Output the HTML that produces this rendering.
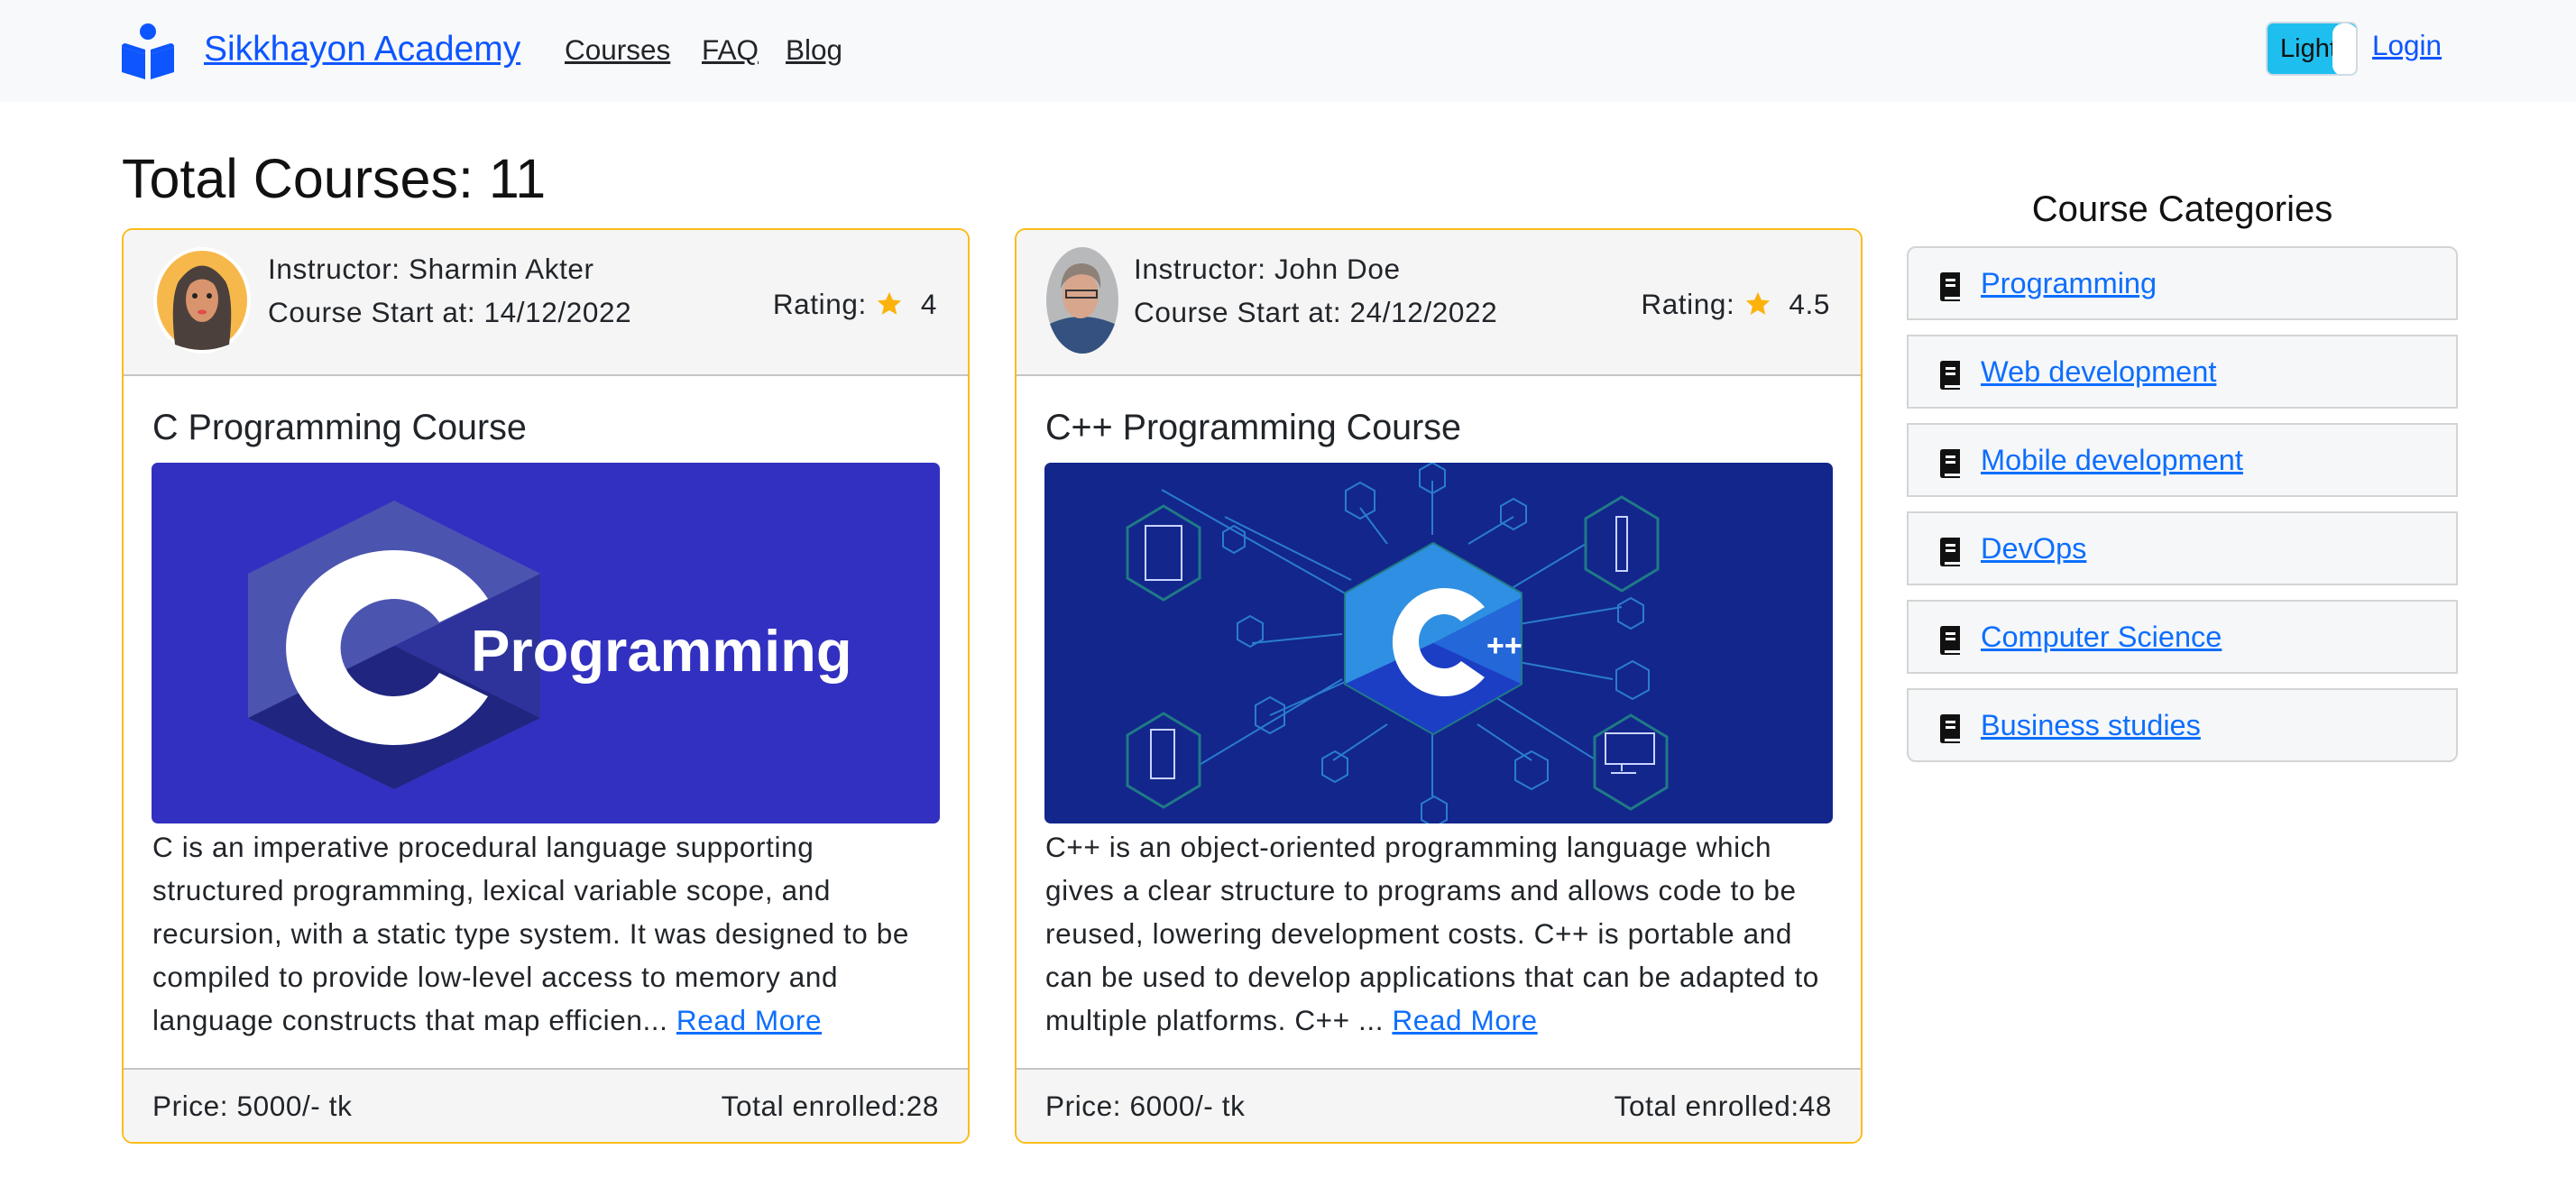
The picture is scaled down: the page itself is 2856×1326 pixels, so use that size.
<!DOCTYPE html>
<html><head><meta charset="utf-8"><style>
*{box-sizing:border-box;margin:0;padding:0}
body{width:2856px;height:1326px;overflow:hidden;background:#fff;font-family:"Liberation Sans",sans-serif;color:#212529;position:relative}
.abs{position:absolute}
a{color:#0d6efd;text-decoration:underline}
.nav{left:0;top:0;width:2856px;height:113px;background:#f8f9fa}
.card{border:2px solid #fbbc1d;border-radius:12px;width:940px;height:1015px;top:253px;overflow:hidden;background:#fff}
.chead{left:0;top:0;width:100%;height:162px;background:#f5f5f5;border-bottom:2px solid #c4c4c4}
.cfoot{left:0;bottom:0;width:100%;height:82px;background:#f5f5f5;border-top:2px solid #c4c4c4}
.t30{font-size:31.5px;letter-spacing:0.6px;white-space:nowrap}
.desc{font-size:31.5px;letter-spacing:0.6px;line-height:48px;white-space:nowrap}
.cat{left:2114px;width:611px;height:82px;background:#f6f7f9;border:2px solid #d4d4d4;border-radius:6px}
.cat a{position:absolute;left:80px;top:21px;font-size:32.5px}
.cat svg{position:absolute;left:35px;top:27px}
</style></head><body>
<div class="abs nav"></div>
<svg class="abs" style="left:133px;top:26px" width="62" height="62" viewBox="0 0 62 62"><circle cx="31" cy="9" r="9" fill="#0d55ff"/><path d="M2 26 L28 34 L28 62 L2 54 Z M34 34 L60 26 L60 54 L34 62 Z" fill="#0d55ff"/><path d="M2 26 Q2 22 6 22 L28 29 L28 34 Z M60 26 Q60 22 56 22 L34 29 L34 34Z" fill="#0d55ff"/></svg>
<a class="abs" style="left:226px;top:33px;font-size:39px;color:#0d55ff">Sikkhayon Academy</a>
<a class="abs" style="left:626px;top:37px;font-size:31.5px;color:#212529">Courses</a>
<a class="abs" style="left:778px;top:37px;font-size:31.5px;color:#212529">FAQ</a>
<a class="abs" style="left:871px;top:37px;font-size:31.5px;color:#212529">Blog</a>
<div class="abs" style="left:2512px;top:24px;width:102px;height:60px;background:#1ebfee;border:2px solid #cfdbe6;border-radius:8px;overflow:hidden"><span class="abs" style="left:14px;top:12px;font-size:29px;color:#111">Light</span><div class="abs" style="left:72px;top:0;width:28px;height:58px;background:#fff;border-radius:12px"></div></div>
<a class="abs" style="left:2630px;top:32px;font-size:31.5px;color:#0d55ff">Login</a>

<div class="abs" style="left:135px;top:163px;font-size:61px;color:#111">Total Courses: 11</div>

<!-- card 1 -->
<div class="abs card" style="left:135px">
 <div class="abs chead"></div>
 <svg class="abs" style="left:31px;top:17px" width="112" height="122" viewBox="0 0 112 122"><ellipse cx="56" cy="61" rx="54" ry="59" fill="#fff"/><ellipse cx="56" cy="61" rx="50" ry="55" fill="#f7b84b"/><path d="M26 110 Q20 60 30 40 Q56 5 82 40 Q92 60 86 110 Q56 122 26 110Z" fill="#4c403c"/><ellipse cx="56" cy="60" rx="18" ry="25" fill="#d8946c"/><path d="M36 50 Q56 25 76 50 Q70 34 56 32 Q42 34 36 50Z" fill="#4c403c"/><circle cx="48" cy="56" r="3" fill="#222"/><circle cx="64" cy="56" r="3" fill="#222"/><ellipse cx="56" cy="74" rx="5" ry="2.5" fill="#e14b4b"/></svg>
 <div class="abs t30" style="left:160px;top:25px">Instructor: Sharmin Akter</div>
 <div class="abs t30" style="left:160px;top:73px">Course Start at: 14/12/2022</div>
 <div class="abs t30" style="right:34px;top:64px">Rating: <svg width="32" height="30" viewBox="0 0 24 24" style="vertical-align:-4px"><path d="M12 1.5l3.1 6.9 7.4.7-5.6 5 1.7 7.4L12 17.6l-6.6 3.9 1.7-7.4-5.6-5 7.4-.7z" fill="#fbb30c"/></svg>&nbsp; 4</div>
 <div class="abs" style="left:32px;top:197px;font-size:39.5px">C Programming Course</div>
 <svg class="abs" style="left:31px;top:258px;border-radius:7px" width="874" height="400" viewBox="0 0 874 400"><rect width="874" height="400" fill="#3230c0"/>
  <path d="M269 42 L431 123 L431 283 L269 362 L107 283 L107 123 Z" fill="#4b55b0"/>
  <path d="M269 203 L431 123 L431 283 Z" fill="#2d339a"/>
  <path d="M107 283 L269 203 L431 283 L269 362 Z" fill="#202580"/>
  <path d="M373 151 A120 108 0 1 0 373 259 L319 233 A59 54 0 1 1 319 177 Z" fill="#fff"/>
  <text x="354" y="231" font-family="Liberation Sans" font-weight="bold" font-size="65" fill="#fff">Programming</text></svg>
 <div class="abs desc" style="left:32px;top:660px">C is an imperative procedural language supporting<br>structured programming, lexical variable scope, and<br>recursion, with a static type system. It was designed to be<br>compiled to provide low-level access to memory and<br>language constructs that map efficien... <a>Read More</a></div>
 <div class="abs cfoot"><div class="abs t30" style="left:32px;top:22px">Price: 5000/- tk</div><div class="abs t30" style="right:32px;top:22px">Total enrolled:28</div></div>
</div>

<!-- card 2 -->
<div class="abs card" style="left:1125px">
 <div class="abs chead"></div>
 <svg class="abs" style="left:31px;top:17px" width="84" height="122" viewBox="0 0 84 122"><defs><clipPath id="e"><ellipse cx="42" cy="61" rx="40" ry="59"/></clipPath></defs><g clip-path="url(#e)"><rect width="84" height="122" fill="#b8b9bb"/><path d="M0 122 L4 88 Q40 70 80 88 L84 122Z" fill="#34517f"/><ellipse cx="40" cy="55" rx="20" ry="26" fill="#d7a68c"/><path d="M18 48 Q20 20 42 20 Q64 22 62 48 Q58 32 40 32 Q24 34 18 48Z" fill="#8d8178"/><rect x="24" y="50" width="34" height="8" fill="none" stroke="#333" stroke-width="2"/></g></svg>
 <div class="abs t30" style="left:130px;top:25px">Instructor: John Doe</div>
 <div class="abs t30" style="left:130px;top:73px">Course Start at: 24/12/2022</div>
 <div class="abs t30" style="right:34px;top:64px">Rating: <svg width="32" height="30" viewBox="0 0 24 24" style="vertical-align:-4px"><path d="M12 1.5l3.1 6.9 7.4.7-5.6 5 1.7 7.4L12 17.6l-6.6 3.9 1.7-7.4-5.6-5 7.4-.7z" fill="#fbb30c"/></svg>&nbsp; 4.5</div>
 <div class="abs" style="left:32px;top:197px;font-size:39.5px">C++ Programming Course</div>
 <svg class="abs" style="left:31px;top:258px;border-radius:7px" width="874" height="400" viewBox="0 0 874 400"><rect width="874" height="400" fill="#13268c"/>
  <g stroke="#2a7ccf" stroke-width="2" fill="none">
   <path d="M340 130 L200 60 M330 190 L230 200 M340 240 L250 280 M360 160 L130 30 M330 240 L130 360 M500 150 L650 60 M520 180 L640 160 M520 220 L630 240 M500 260 L660 360 M430 80 L430 20 M380 290 L320 330 M430 300 L430 370 M480 290 L540 330 M380 90 L350 50 M470 90 L520 60"/>
   <path d="M430 0 l14 8 v18 l-14 8 l-14 -8 v-18z M350 22 l16 9 v22 l-16 9 l-16 -9 v-22z M520 40 l14 8 v18 l-14 8 l-14 -8 v-18z M228 170 l14 8 v18 l-14 8 l-14 -8 v-18z M250 260 l16 9 v22 l-16 9 l-16 -9 v-22z M650 150 l14 8 v18 l-14 8 l-14 -8 v-18z M652 220 l18 10 v22 l-18 10 l-18 -10 v-22z M322 320 l14 8 v18 l-14 8 l-14 -8 v-18z M432 370 l14 8 v18 l-14 8 l-14 -8 v-18z M540 320 l18 10 v22 l-18 10 l-18 -10 v-22z M210 70 l12 7 v16 l-12 7 l-12 -7 v-16z"/>
  </g>
  <g stroke="#1f7a86" stroke-width="3" fill="#13268c">
   <path d="M132 48 l40 24 v56 l-40 24 l-40 -24 v-56z M132 278 l40 24 v56 l-40 24 l-40 -24 v-56z M640 38 l40 24 v56 l-40 24 l-40 -24 v-56z M650 280 l40 24 v56 l-40 24 l-40 -24 v-56z"/>
  </g>
  <g stroke="#c8d4ff" stroke-width="2" fill="none"><rect x="112" y="70" width="40" height="60"/><rect x="118" y="296" width="26" height="54"/><rect x="634" y="60" width="12" height="60"/><rect x="622" y="300" width="54" height="34"/><path d="M640 334 v8 M628 344 h28"/></g>
  <path d="M431 90 L528 145 L528 245 L431 300 L334 245 L334 145 Z" fill="#1e3fc7" stroke="#1f7a86" stroke-width="4"/>
  <path d="M431 90 L528 145 L528 175 L431 200 L334 245 L334 145Z" fill="#2f8fe2"/>
  <path d="M431 200 L528 175 L528 245 L431 300 L334 245 Z" fill="#1c3ec4"/>
  <path d="M431 200 L528 150 L528 245Z" fill="#2367d8"/>
  <path d="M488 160 A58 60 0 1 0 488 238 L462 220 A28 30 0 1 1 462 176 Z" fill="#fff"/>
  <text x="490" y="214" font-family="Liberation Sans" font-weight="bold" font-size="34" fill="#fff">++</text></svg>
 <div class="abs desc" style="left:32px;top:660px">C++ is an object-oriented programming language which<br>gives a clear structure to programs and allows code to be<br>reused, lowering development costs. C++ is portable and<br>can be used to develop applications that can be adapted to<br>multiple platforms. C++ ... <a>Read More</a></div>
 <div class="abs cfoot"><div class="abs t30" style="left:32px;top:22px">Price: 6000/- tk</div><div class="abs t30" style="right:32px;top:22px">Total enrolled:48</div></div>
</div>

<div class="abs" style="left:2114px;width:611px;top:210px;text-align:center;font-size:40px;color:#111">Course Categories</div>
<div class="abs cat" style="top:273px;border-radius:10px 10px 0 0"><svg width="22" height="32" viewBox="0 0 22 32"><path d="M3 0 H22 V27 H5 V30 H22 V32 H3 Q0 32 0 29 V3 Q0 0 3 0Z" fill="#111"/><rect x="6" y="7" width="11" height="3" fill="#fff"/><rect x="6" y="13" width="11" height="3" fill="#fff"/></svg><a>Programming</a></div>
<div class="abs cat" style="top:371px;border-radius:0"><svg width="22" height="32" viewBox="0 0 22 32"><path d="M3 0 H22 V27 H5 V30 H22 V32 H3 Q0 32 0 29 V3 Q0 0 3 0Z" fill="#111"/><rect x="6" y="7" width="11" height="3" fill="#fff"/><rect x="6" y="13" width="11" height="3" fill="#fff"/></svg><a>Web development</a></div>
<div class="abs cat" style="top:469px;border-radius:0"><svg width="22" height="32" viewBox="0 0 22 32"><path d="M3 0 H22 V27 H5 V30 H22 V32 H3 Q0 32 0 29 V3 Q0 0 3 0Z" fill="#111"/><rect x="6" y="7" width="11" height="3" fill="#fff"/><rect x="6" y="13" width="11" height="3" fill="#fff"/></svg><a>Mobile development</a></div>
<div class="abs cat" style="top:567px;border-radius:0"><svg width="22" height="32" viewBox="0 0 22 32"><path d="M3 0 H22 V27 H5 V30 H22 V32 H3 Q0 32 0 29 V3 Q0 0 3 0Z" fill="#111"/><rect x="6" y="7" width="11" height="3" fill="#fff"/><rect x="6" y="13" width="11" height="3" fill="#fff"/></svg><a>DevOps</a></div>
<div class="abs cat" style="top:665px;border-radius:0"><svg width="22" height="32" viewBox="0 0 22 32"><path d="M3 0 H22 V27 H5 V30 H22 V32 H3 Q0 32 0 29 V3 Q0 0 3 0Z" fill="#111"/><rect x="6" y="7" width="11" height="3" fill="#fff"/><rect x="6" y="13" width="11" height="3" fill="#fff"/></svg><a>Computer Science</a></div>
<div class="abs cat" style="top:763px;border-radius:0 0 10px 10px"><svg width="22" height="32" viewBox="0 0 22 32"><path d="M3 0 H22 V27 H5 V30 H22 V32 H3 Q0 32 0 29 V3 Q0 0 3 0Z" fill="#111"/><rect x="6" y="7" width="11" height="3" fill="#fff"/><rect x="6" y="13" width="11" height="3" fill="#fff"/></svg><a>Business studies</a></div>
</body></html>
